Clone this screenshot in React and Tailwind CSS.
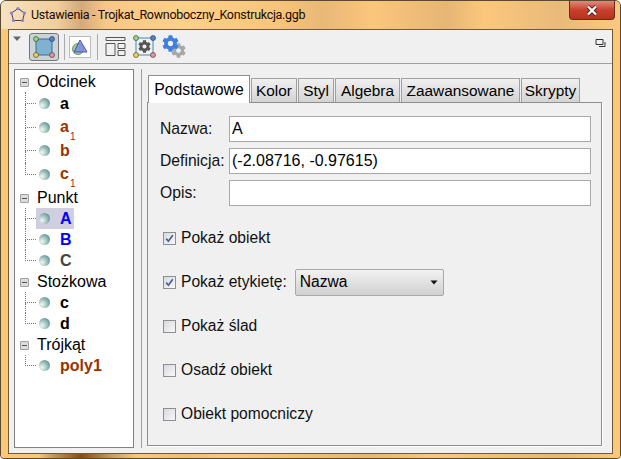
import React from "react";
import { FaCog } from "react-icons/fa";

const SANS = "font-['Liberation_Sans',Arial,sans-serif]";

function Ball() {
  return (
    <span className="block h-[11px] w-[11px] shrink-0 rounded-full bg-[radial-gradient(circle_at_28%_68%,#f6f8f2_0%,#a8c8c0_40%,#3f7488_100%)]" />
  );
}

function Minus() {
  return (
    <span className="flex h-[9px] w-[9px] items-center justify-center rounded-[1px] border border-[#a0a0a0] bg-[#dcdcdc]">
      <span className="h-px w-[5px] bg-[#555]" />
    </span>
  );
}

function TreeGroup({ label, items, rowClass, className }) {
  return (
    <div className={className}>
      <div className="flex h-[20px] items-center">
        <span className="ml-[5px] w-[17px]"><Minus /></span>
        <span className="text-[16px] text-black">{label}</span>
      </div>
      {items.map((it, i) => (
        <div key={it.name + i} className={`ml-[10px] flex items-center ${rowClass}`}>
          <span className="flex h-full w-[11px] shrink-0 flex-col">
            <span className="flex-1 border-b border-l border-dotted border-[#777]" />
            <span className={`flex-1 ${i < items.length - 1 ? "border-l border-dotted border-[#777]" : ""}`} />
          </span>
          <span className={`flex h-[21px] w-[38px] items-center pl-[3px] ${it.selected ? "bg-[#cfcfdf]" : ""}`}>
            <Ball />
            <span className={`ml-[10px] text-[16px] font-bold whitespace-nowrap ${it.color}`}>
              {it.name}
              {it.sub && <sub className="ml-px align-[-5px] text-[10px] font-normal text-[#b0201a]">{it.sub}</sub>}
            </span>
          </span>
        </div>
      ))}
    </div>
  );
}

function Tab({ children, w, active }) {
  return active ? (
    <div style={{ width: w }} className="z-10 flex h-[28px] items-center justify-center border border-b-0 border-[#8e8e8e] bg-white text-[15.8px] text-black">
      {children}
    </div>
  ) : (
    <div style={{ width: w }} className="mt-[3px] flex h-[24px] items-center justify-center border border-b-0 border-[#a0a0a0] bg-gradient-to-b from-[#f0f0f0] to-[#d4d4d4] text-[15.4px] text-black">
      {children}
    </div>
  );
}

function Field({ label, value }) {
  return (
    <div className="flex h-[26px] items-center">
      <span className="w-[69px] text-[15.7px] whitespace-nowrap text-[#111]">{label}</span>
      <div className="flex h-[26px] w-[362px] items-center border border-[#a8a8a8] bg-white px-[2px] text-[16px] text-black">{value}</div>
    </div>
  );
}

function Check({ checked }) {
  return (
    <span className="flex h-[13px] w-[13px] shrink-0 items-center justify-center border border-[#8e8f8f] bg-gradient-to-br from-[#d8d9de] to-[#f8f8fa]">
      {checked && (
        <svg width="9" height="9" viewBox="0 0 9 9">
          <path d="M1.2 4.6 L3.4 7.2 L7.8 1.2" fill="none" stroke="#4a5f97" strokeWidth="1.7" />
        </svg>
      )}
    </span>
  );
}

function CheckRow({ label, checked, children }) {
  return (
    <div className="ml-[15px] flex h-[28px] items-center">
      <Check checked={checked} />
      <span className="ml-[5px] text-[15.6px] whitespace-nowrap text-[#111]">{label}</span>
      {children}
    </div>
  );
}

function Corners({ size }) {
  const lo = 3;
  const hi = size - 3;
  return (
    <>
      <circle cx={lo} cy={lo} r="2.5" fill="#8fdc7c" stroke="#333" strokeWidth=".6" />
      <circle cx={hi} cy={lo} r="2.5" fill="#4f7fdc" stroke="#333" strokeWidth=".6" />
      <circle cx={lo} cy={hi} r="2.5" fill="#f4d43c" stroke="#333" strokeWidth=".6" />
      <circle cx={hi} cy={hi} r="2.5" fill="#ef8f8f" stroke="#333" strokeWidth=".6" />
    </>
  );
}

function ToolIcons() {
  return (
    <div className="flex h-[33px] items-center">
      {/* dropdown caret */}
      <svg width="10" height="6" viewBox="0 0 10 6" className="mb-[16px] ml-[3px]">
        <path d="M1 0.5 H9 L5 5 Z" fill="#666" />
      </svg>
      <div className="ml-[7px] flex h-[28px] w-[30px] items-center justify-center rounded-[3px] border border-[#777] bg-[#c9d3d8]">
        <svg width="22" height="22" viewBox="0 0 22 22">
          <rect x="3" y="3" width="16" height="16" fill="#7fb2d0" stroke="#3a6f90" />
          <Corners size={22} />
        </svg>
      </div>
      <span className="ml-[5px] h-[26px] w-px bg-[#aaa]" />
      <div className="ml-[4px] flex h-[22px] w-[22px] items-center justify-center border border-[#bbb] bg-white">
        <svg width="20" height="20" viewBox="0 0 20 20">
          <circle cx="8" cy="12" r="5.5" fill="#9ed08e" stroke="#6a9a5e" />
          <path d="M10 3 L17 15 H4 Z" fill="#7f86e8" fillOpacity=".8" stroke="#4a50b8" />
        </svg>
      </div>
      <span className="ml-[6px] h-[26px] w-px bg-[#aaa]" />
      <svg width="21" height="20" viewBox="0 0 21 20" className="ml-[7px]">
        <path d="M1 0.5 H20 V3.5 H1 Z M1 6.5 H10 M1 6.5 V18.5 H10 V6.5 M13 6.5 H20 V11.5 H13 Z M13 13.5 H20 V18.5 H13 Z" fill="none" stroke="#555" />
      </svg>
      <div className="relative ml-[7px] flex h-[23px] w-[23px] items-center justify-center">
        <svg width="23" height="23" viewBox="0 0 23 23" className="absolute inset-0">
          <rect x="3" y="3" width="17" height="17" fill="none" stroke="#6fa8c8" strokeWidth="1.4" />
          <Corners size={23} />
        </svg>
        <FaCog className="relative text-[13px] text-[#555]" />
      </div>
      <div className="relative ml-[6px] h-[23px] w-[24px]">
        <FaCog className="absolute right-0 bottom-0 text-[15px] text-[#a8a8a8]" />
        <FaCog className="absolute top-0 left-0 text-[17px] text-[#3f7fe0]" />
      </div>
    </div>
  );
}

export default function App() {
  const tree = [
    { label: "Odcinek", rowClass: "h-[23.5px]", className: "", items: [
      { name: "a", color: "text-black" },
      { name: "a", sub: "1", color: "text-[#993300]" },
      { name: "b", color: "text-[#993300]" },
      { name: "c", sub: "1", color: "text-[#993300]" },
    ] },
    { label: "Punkt", rowClass: "h-[21px]", className: "mt-[2px]", items: [
      { name: "A", color: "text-[#0000ff]", selected: true },
      { name: "B", color: "text-[#0000ff]" },
      { name: "C", color: "text-[#444]" },
    ] },
    { label: "Stożkowa", rowClass: "h-[21px]", className: "mt-[1px]", items: [
      { name: "c", color: "text-black" },
      { name: "d", color: "text-black" },
    ] },
    { label: "Trójkąt", rowClass: "h-[21px]", className: "mt-[1px]", items: [{ name: "poly1", color: "text-[#993300]" }] },
  ];

  return (
    <div className={`${SANS} flex h-[459px] w-[621px] flex-col overflow-hidden rounded-t-[6px] rounded-b-[4px] border border-[#5a4a30] bg-[#fcc878]`}>
      {/* title bar */}
      <div className="flex h-[28px] shrink-0 items-center bg-[linear-gradient(90deg,#f6e2c0_0%,#f2cf9c_9%,#d4aa7c_13%,#f8c888_17%,#fdd08a_30%,#f8c47c_45%,#e8b878_52%,#fbc67c_60%,#e6b676_72%,#fbc77c_78%,#e8ba7a_90%,#fbc87e_100%)] pl-[7px]">
        <svg width="18" height="18" viewBox="0 0 18 18" className="ml-[1px]">
          <path d="M9 2.5 L15.5 7 L13.5 14.5 H4.5 L2.5 7 Z" fill="none" stroke="#444" />
          <circle cx="9" cy="2.5" r="1.6" fill="#8a7fd8" />
          <circle cx="15.5" cy="7" r="1.6" fill="#8a7fd8" />
          <circle cx="13.5" cy="14.5" r="1.6" fill="#8a7fd8" />
          <circle cx="4.5" cy="14.5" r="1.6" fill="#8a7fd8" />
          <circle cx="2.5" cy="7" r="1.6" fill="#8a7fd8" />
        </svg>
        <span className="ml-[4px] font-['Roboto',sans-serif] text-[12.5px] tracking-[-0.3px] whitespace-nowrap text-[#1a0a00]">Ustawienia - Trojkat_Rownoboczny_Konstrukcja.ggb</span>
        <div className="mr-[5px] mb-[9px] ml-auto flex h-[19px] w-[46px] items-center justify-center rounded-b-[4px] border border-t-0 border-[#6b2a20] bg-gradient-to-b from-[#e0897a] via-[#c6402c] to-[#b8331f]">
          <svg width="14" height="11" viewBox="0 0 14 11">
            <path d="M3 1.5 L11 9.5 M11 1.5 L3 9.5" stroke="#4a1a12" strokeWidth="4" />
            <path d="M3 1.5 L11 9.5 M11 1.5 L3 9.5" stroke="#fff" strokeWidth="2.4" />
          </svg>
        </div>
      </div>

      {/* client area */}
      <div className="mx-[7px] flex min-h-0 flex-1 flex-col border border-[#6e5a3c] bg-[#f0f0f0]">
        <div className="flex h-[34px] shrink-0 items-center justify-between border-b border-[#a0a0a0]">
          <ToolIcons />
          <svg width="11" height="10" viewBox="0 0 11 10" className="mr-[6px] mb-[8px]">
            <path d="M1 1.5 H8 V6.5 H1 Z" fill="none" stroke="#333" />
            <path d="M10 4 V8.5 H4" fill="none" stroke="#333" />
          </svg>
        </div>

        <div className="flex min-h-0 flex-1 pt-[5px] pb-[5px] pl-[5px]">
          {/* object tree */}
          <div className="h-full w-[120px] shrink-0 border border-[#808080] bg-white pt-[2px]">
            {tree.map((g) => (
              <TreeGroup key={g.label} label={g.label} items={g.items} rowClass={g.rowClass} className={g.className} />
            ))}
          </div>

          <div className="ml-[7px] h-full w-px bg-[#a0a0a0]" />

          {/* properties */}
          <div className="mt-[6px] ml-[5px] flex h-full w-[455px] flex-col">
            <div className="flex h-[27px] shrink-0 items-start gap-px pl-px">
              <Tab w={102} active>Podstawowe</Tab>
              <Tab w={46}>Kolor</Tab>
              <Tab w={36}>Styl</Tab>
              <Tab w={65}>Algebra</Tab>
              <Tab w={119}>Zaawansowane</Tab>
              <Tab w={59}>Skrypty</Tab>
            </div>
            <div className="h-[344px] shrink-0 border border-[#8e8e8e] bg-[#f0f0f0] shadow-[1px_1px_0_#fff]">
              <div className="flex flex-col gap-[6px] pt-[13px] pl-[12px]">
                <Field label="Nazwa:" value="A" />
                <Field label="Definicja:" value="(-2.08716, -0.97615)" />
                <Field label="Opis:" value="" />
              </div>
              <div className="mt-[18px] flex flex-col gap-[16px]">
                <CheckRow label="Pokaż obiekt" checked />
                <CheckRow label="Pokaż etykietę:" checked>
                  <div className="ml-[8px] flex h-[27px] w-[149px] shrink-0 items-center justify-between rounded-[2px] border border-[#a8a8a8] bg-gradient-to-b from-[#f2f2f2] to-[#d0d0d0] pr-[5px] pl-[4px] text-[15.6px] text-black">
                    Nazwa
                    <svg width="8" height="5" viewBox="0 0 8 5"><path d="M0.5 0.5 H7.5 L4 4.5 Z" fill="#111" /></svg>
                  </div>
                </CheckRow>
                <CheckRow label="Pokaż ślad" />
                <CheckRow label="Osadź obiekt" />
                <CheckRow label="Obiekt pomocniczy" />
              </div>
            </div>
          </div>
        </div>
      </div>

      {/* bottom edge of the frame */}
      <div className="h-[4px] shrink-0 bg-[linear-gradient(90deg,#fcc878_0%,#fcc878_6%,#c8a060_8%,#8a4a10_13%,#c8a060_18%,#fcc878_22%,#f0bc70_30%,#fcc878_36%,#e8b870_60%,#fcc878_70%,#e8b870_90%,#fcc878_100%)]" />
    </div>
  );
}
